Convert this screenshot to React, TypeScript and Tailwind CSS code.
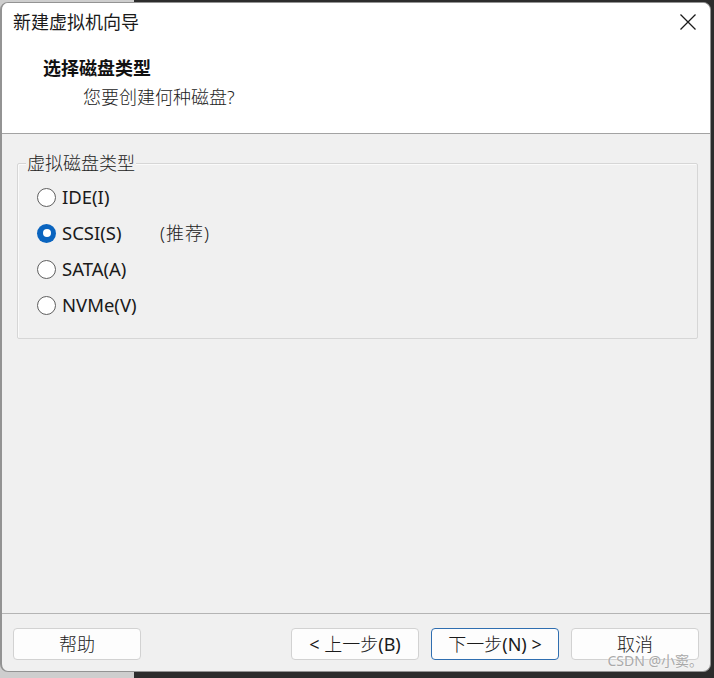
import React from "react";

const SANS = "font-['Noto_Sans','Noto_Sans_CJK_SC',sans-serif]";

function Radio({ checked }: { checked?: boolean }) {
  return checked ? (
    <span className="flex h-[19px] w-[19px] shrink-0 items-center justify-center rounded-full bg-[#0a64bf]">
      <span className="h-[8px] w-[8px] rounded-full bg-white" />
    </span>
  ) : (
    <span className="h-[19px] w-[19px] shrink-0 rounded-full border border-[#5f5f5f] bg-white" />
  );
}

function Btn({ children, primary }: { children: React.ReactNode; primary?: boolean }) {
  return (
    <div
      className={
        "flex h-[32px] w-[128px] items-center justify-center rounded-[4px] bg-[#fdfdfd] text-[18px] text-[#1b1b1b] " +
        (primary ? "border border-[#2f6eb0]" : "border border-[#d2d2d2]")
      }
    >
      {children}
    </div>
  );
}

export default function App() {
  const options = [
    { label: "IDE(I)", checked: false },
    { label: "SCSI(S)", checked: true, note: "(推荐)" },
    { label: "SATA(A)", checked: false },
    { label: "NVMe(V)", checked: false },
  ];
  return (
    <div className={"h-[678px] w-[714px] bg-[linear-gradient(to_right,#cecece_134px,#2c2c2c_134px)] pt-[2px] " + SANS}>
      <div className="relative flex h-[670px] w-[711px] flex-col overflow-hidden rounded-[8px] border border-l-2 border-[#939393] bg-[#f0f0f0]">
        {/* header */}
        <div className="h-[131px] shrink-0 border-b border-[#a3a3a3] bg-white">
          <div className="flex h-[38px] items-center justify-between pl-[11px] pr-[14px]">
            <span className="text-[18px] leading-[22px] text-[#1a1a1a]">新建虚拟机向导</span>
            <svg width="16" height="16" viewBox="0 0 16 16" className="text-[#1a1a1a]">
              <path d="M0.5 0.5 L15.5 15.5 M15.5 0.5 L0.5 15.5" stroke="currentColor" strokeWidth="1.3" fill="none" />
            </svg>
          </div>
          <div className="mt-[16px] pl-[41px] text-[18px] font-bold leading-[22px] text-[#111]">选择磁盘类型</div>
          <div className="mt-[7px] pl-[81px] text-[18px] font-light leading-[22px] text-[#222]">您要创建何种磁盘?</div>
        </div>

        {/* body */}
        <div className="flex-1 pl-[15px] pr-[12px] pt-[29px]">
          <div className="relative h-[176px] rounded-[2px] border border-[#d6d6d6] shadow-[inset_1px_1px_0_#fafafa]">
            <span className="absolute left-[8px] top-[-12px] bg-[#f0f0f0] px-[1px] text-[18px] font-light leading-[22px] text-[#222]">
              虚拟磁盘类型
            </span>
            <div className="flex flex-col pl-[19px] pt-[15px]">
              {options.map((o) => (
                <div key={o.label} className="flex h-[36px] items-center">
                  <Radio checked={o.checked} />
                  <span className="ml-[6px] w-[98px] text-[18.5px] leading-[24px] text-[#1a1a1a]">{o.label}</span>
                  {o.note && <span className="text-[18px] font-light tracking-[1px] text-[#222]">{o.note}</span>}
                </div>
              ))}
            </div>
          </div>
        </div>

        {/* footer */}
        <div className="flex h-[58px] shrink-0 items-start border-t border-[#b4b4b4] pl-[11px] pr-[11px] pt-[14px]">
          <Btn>
            <span className="font-light">帮助</span>
          </Btn>
          <div className="ml-auto flex gap-[12px]">
            <Btn>
              <span>&lt;&nbsp;</span>
              <span className="font-light">上一步</span>
              <span>(B)</span>
            </Btn>
            <Btn primary>
              <span className="font-light">下一步</span>
              <span>(N)&nbsp;&gt;</span>
            </Btn>
            <Btn>
              <span className="font-light">取消</span>
            </Btn>
          </div>
        </div>

        <span className="absolute bottom-[1px] right-[7px] text-[14px] leading-[18px] text-[#a9a9a9] [text-shadow:0_0_2px_#ffffff]">
          CSDN @小窦。
        </span>
      </div>
    </div>
  );
}
